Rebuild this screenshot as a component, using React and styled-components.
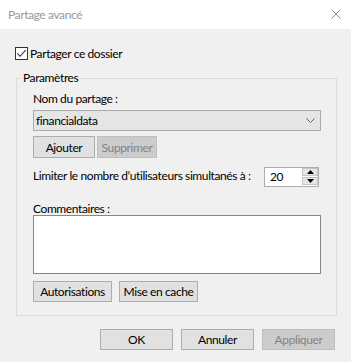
import React from "react";
import styled, { createGlobalStyle } from "styled-components";

const GlobalStyle = createGlobalStyle`
  html, body {
    margin: 0;
    padding: 0;
    background: #f0f0f0;
  }
  body {
    font-family: Lato, "Liberation Sans", sans-serif;
    font-size: 12px;
    letter-spacing: -0.4px;
    color: #000;
  }
`;

const App = () => {
  return (
    <>
      <GlobalStyle />
      <Window>
        <TitleBar>
          <Title>Partage avancé</Title>
          <CloseButton aria-label="Fermer">
            <svg width="10" height="10" viewBox="0 0 10 10">
              <path d="M0.5 0.5 L9.5 9.5 M9.5 0.5 L0.5 9.5" stroke="#8a8a8a" strokeWidth="1" />
            </svg>
          </CloseButton>
        </TitleBar>

        <Body>
          <CheckRow>
            <CheckBox>
              <svg width="11" height="11" viewBox="0 0 11 11">
                <path d="M1.5 5.5 L4.2 8.3 L9.6 2.2" fill="none" stroke="#333" strokeWidth="1.1" />
              </svg>
            </CheckBox>
            <CheckLabel>Partager ce dossier</CheckLabel>
          </CheckRow>

          <Group>
            <Legend>Paramètres</Legend>

            <Label>Nom du partage :</Label>
            <Combo>
              <span>financialdata</span>
              <svg width="9" height="5" viewBox="0 0 9 5">
                <path d="M0.5 0.5 L4.5 4.5 L8.5 0.5" fill="none" stroke="#606060" strokeWidth="1" />
              </svg>
            </Combo>

            <ButtonRow $gap={2} $top={5}>
              <Button $w={62}>Ajouter</Button>
              <Button $w={60} disabled>Supprimer</Button>
            </ButtonRow>

            <LimitRow>
              <LimitLabel>Limiter le nombre d’utilisateurs simultanés à :</LimitLabel>
              <Spinner>
                <SpinValue>20</SpinValue>
                <SpinArrows>
                  <SpinArrow>
                    <svg width="7" height="4" viewBox="0 0 7 4">
                      <path d="M0 4 L3.5 0 L7 4 Z" fill="#000" />
                    </svg>
                  </SpinArrow>
                  <SpinArrow>
                    <svg width="7" height="4" viewBox="0 0 7 4">
                      <path d="M0 0 L3.5 4 L7 0 Z" fill="#000" />
                    </svg>
                  </SpinArrow>
                </SpinArrows>
              </Spinner>
            </LimitRow>

            <CommentLabel>Commentaires :</CommentLabel>
            <Comments />

            <ButtonRow $gap={7} $top={7}>
              <Button $w={79} $h={21}>Autorisations</Button>
              <Button $w={79} $h={21}>Mise en cache</Button>
            </ButtonRow>
          </Group>

          <Footer>
            <Button $w={73} $h={21}>OK</Button>
            <Button $w={73} $h={21}>Annuler</Button>
            <Button $w={73} $h={21} disabled>Appliquer</Button>
          </Footer>
        </Body>
      </Window>
    </>
  );
};

// --- Styled Components ---

const Window = styled.div`
  width: 351px;
  height: 362px;
  display: flex;
  flex-direction: column;
  background: #f0f0f0;
  overflow: hidden;
`;

const TitleBar = styled.div`
  height: 29px;
  background: #fff;
  display: flex;
  align-items: center;
  justify-content: space-between;
  padding: 0 10px 0 8px;
  box-sizing: border-box;
`;

const Title = styled.div`
  color: #999;
  font-size: 12px;
  line-height: 15px;
  margin-top: -1px;
`;

const CloseButton = styled.div`
  width: 10px;
  height: 10px;
  display: flex;
  margin-top: -1px;
`;

const Body = styled.div`
  display: flex;
  flex-direction: column;
  padding: 18px 0 0 15px;
`;

const CheckRow = styled.div`
  display: flex;
  align-items: center;
  height: 13px;
  gap: 2px;
`;

const CheckBox = styled.div`
  width: 13px;
  height: 13px;
  box-sizing: border-box;
  border: 1px solid #333;
  background: #fff;
  display: flex;
  align-items: center;
  justify-content: center;
`;

const CheckLabel = styled.span`
  line-height: 13px;
`;

const Group = styled.fieldset`
  margin: 9px 0 0 1px;
  width: 321px;
  box-sizing: border-box;
  border: 1px solid #dcdcdc;
  padding: 4px 15px 13px 16px;
  display: flex;
  flex-direction: column;
  min-width: 0;
`;

const Legend = styled.legend`
  padding: 0 2px;
  margin-left: -12px;
  line-height: 18px;
`;

const Label = styled.div`
  line-height: 15px;
`;

const Combo = styled.div`
  margin-top: 4px;
  height: 21px;
  box-sizing: border-box;
  border: 1px solid #acacac;
  background: #e5e5e5;
  display: flex;
  align-items: center;
  justify-content: space-between;
  padding: 0 5px 0 2px;
  line-height: 15px;
`;

const ButtonRow = styled.div`
  display: flex;
  gap: ${(p) => p.$gap}px;
  margin-top: ${(p) => p.$top}px;
`;

const Button = styled.button`
  width: ${(p) => p.$w}px;
  height: ${(p) => p.$h || 22}px;
  box-sizing: border-box;
  border: 1px solid #adadad;
  background: #e1e1e1;
  font-family: inherit;
  font-size: 12px;
  letter-spacing: inherit;
  color: #000;
  padding: 0;
  margin: 0;
  border-radius: 0;
  line-height: 15px;

  &:disabled {
    background: #cccccc;
    border-color: #bfbfbf;
    color: #838383;
  }
`;

const LimitRow = styled.div`
  display: flex;
  align-items: flex-start;
  justify-content: space-between;
  margin-top: 9px;
  padding-right: 2px;
`;

const LimitLabel = styled.div`
  line-height: 15px;
  margin-top: 1px;
  white-space: nowrap;
`;

const Spinner = styled.div`
  width: 55px;
  height: 20px;
  flex-shrink: 0;
  box-sizing: border-box;
  border: 1px solid #abadb3;
  background: #fff;
  display: flex;
  justify-content: space-between;
`;

const SpinValue = styled.span`
  line-height: 18px;
  padding-left: 5px;
`;

const SpinArrows = styled.div`
  width: 16px;
  display: flex;
  flex-direction: column;
  gap: 1px;
  padding: 0 0 1px 0;
`;

const SpinArrow = styled.div`
  flex: 1;
  background: #e6e6e6;
  border: 1px solid #c4c4c4;
  display: flex;
  align-items: center;
  justify-content: center;
`;

const CommentLabel = styled.div`
  line-height: 13px;
  margin-top: 15px;
`;

const Comments = styled.div`
  margin-top: 0;
  height: 59px;
  box-sizing: border-box;
  border: 1px solid #828790;
  background: #fff;
`;

const Footer = styled.div`
  display: flex;
  justify-content: flex-end;
  gap: 8px;
  margin-top: 13px;
  padding-right: 16px;
`;

export default App;
